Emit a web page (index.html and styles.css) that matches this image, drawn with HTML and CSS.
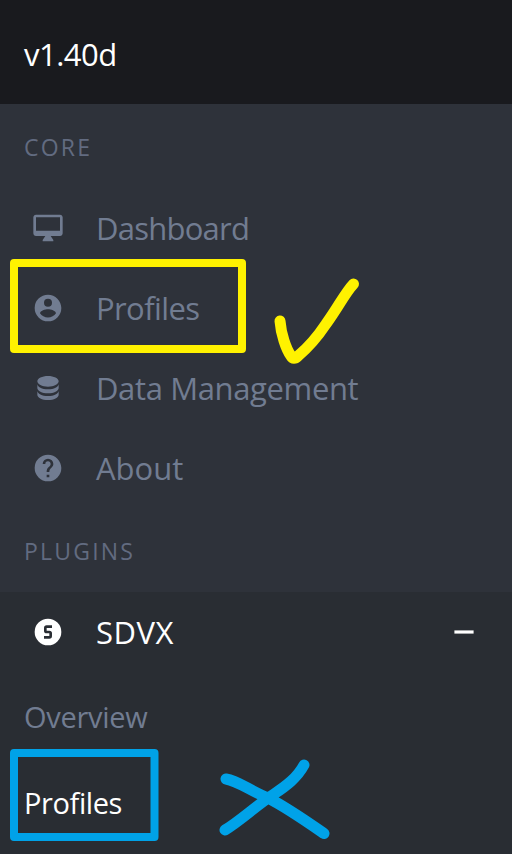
FILE: index.html
```html
<!DOCTYPE html>
<html lang="en">
<head>
<meta charset="utf-8">
<title>v1.40d</title>
<link rel="stylesheet" href="styles.css">
</head>
<body>
<aside class="sidebar">
  <header class="brand"><span class="t-version">v1.40d</span></header>
  <h2 class="label label-core"><span>CORE</span></h2>
  <nav class="menu">
    <a class="item"><svg class="icon" viewBox="0 0 24 24"><path d="M21 2H3c-1.1 0-2 .9-2 2v12c0 1.1.9 2 2 2h7l-2 3v1h8v-1l-2-3h7c1.1 0 2-.9 2-2V4c0-1.1-.9-2-2-2zm0 12H3V4h18v10z"/></svg><span class="t-dashboard">Dashboard</span></a>
    <a class="item"><svg class="icon" viewBox="0 0 24 24"><path d="M12,19.2C9.5,19.2 7.29,17.92 6,16C6.03,14 10,12.9 12,12.9C14,12.9 17.97,14 18,16C16.71,17.92 14.5,19.2 12,19.2M12,5A3,3 0 0,1 15,8A3,3 0 0,1 12,11A3,3 0 0,1 9,8A3,3 0 0,1 12,5M12,2A10,10 0 0,0 2,12A10,10 0 0,0 12,22A10,10 0 0,0 22,12C22,6.47 17.5,2 12,2Z"/></svg><span class="t-profiles">Profiles</span></a>
    <a class="item"><svg class="icon" viewBox="0 0 24 24"><path d="M12,3C7.58,3 4,4.79 4,7C4,9.21 7.58,11 12,11C16.42,11 20,9.21 20,7C20,4.79 16.42,3 12,3M4,9V12C4,14.21 7.58,16 12,16C16.42,16 20,14.21 20,12V9C20,11.21 16.42,13 12,13C7.58,13 4,11.21 4,9M4,14V17C4,19.21 7.58,21 12,21C16.42,21 20,19.21 20,17V14C20,16.21 16.42,18 12,18C7.58,18 4,16.21 4,14Z"/></svg><span class="t-data">Data Management</span></a>
    <a class="item"><svg class="icon" viewBox="0 0 24 24"><path d="M15.07,11.25L14.17,12.17C13.45,12.89 13,13.5 13,15H11V14.5C11,13.39 11.45,12.39 12.17,11.67L13.41,10.41C13.78,10.05 14,9.55 14,9C14,7.89 13.1,7 12,7A2,2 0 0,0 10,9H8A4,4 0 0,1 12,5A4,4 0 0,1 16,9C16,9.88 15.64,10.67 15.07,11.25M13,19H11V17H13M12,2A10,10 0 0,0 2,12A10,10 0 0,0 12,22A10,10 0 0,0 22,12C22,6.47 17.5,2 12,2Z"/></svg><span class="t-about">About</span></a>
  </nav>
  <h2 class="label label-plugins"><span>PLUGINS</span></h2>
  <section class="plugin">
    <a class="item active"><svg class="icon" viewBox="0 0 24 24"><path d="M11,7A2,2 0 0,0 9,9V11A2,2 0 0,0 11,13H13V15H9V17H13A2,2 0 0,0 15,15V13A2,2 0 0,0 13,11H11V9H15V7H11M12,2A10,10 0 0,1 22,12A10,10 0 0,1 12,22A10,10 0 0,1 2,12A10,10 0 0,1 12,2Z"/></svg><span class="t-sdvx">SDVX</span><svg class="icon toggle" viewBox="0 0 24 24"><path d="M19.2,13.2H4.8V10.8H19.2V13.2Z"/></svg></a>
    <a class="sub"><span class="t-overview">Overview</span></a>
    <a class="sub active"><span class="t-subprofiles">Profiles</span></a>
  </section>
</aside>
<svg class="marks" viewBox="0 0 512 854">
  <g class="yellow">
    <rect class="frame" x="14" y="263" width="228" height="86"/>
    <path class="stroke" d="M280 321C281 334 286 349 291 356Q293.500 360.500 298 356C304 351 314 342 326 324C339 306 345 293 353.500 284"/>
  </g>
  <g class="blue">
    <rect class="frame" x="14" y="753" width="140.500" height="84"/>
    <path class="stroke" d="M226 779C238 781 249 790 268 798C286 807 306 821 324 833.500M225 830C240 821 257 805 274 794C286 786 297 778 304 765"/>
  </g>
</svg>
</body>
</html>
```
FILE: styles.css
```css
body {
  margin: 0;
  background: #2e323a;
  font-family: "Open Sans", "Noto Sans", sans-serif;
}
.sidebar {
  display: flex;
  flex-direction: column;
  height: 854px;
  overflow: hidden;
  color: #717c91;
  white-space: nowrap;
}
.brand {
  display: flex;
  align-items: center;
  height: 104px;
  padding: 4px 24px 0;
  box-sizing: border-box;
  background: #191a1e;
  color: #fff;
  font-size: 31px;
}
.label {
  display: flex;
  align-items: center;
  height: 84px;
  margin: 0;
  padding: 1px 24px 0;
  box-sizing: border-box;
  color: #626b80;
  font-size: 23px;
  font-weight: 400;
  letter-spacing: 2.200px;
}
.item {
  display: flex;
  align-items: center;
  height: 80px;
  padding: 0 32px;
  font-size: 31px;
}
.item span {
  margin-left: 32px;
}
.icon {
  width: 32px;
  height: 32px;
  flex: none;
  fill: currentColor;
}
.plugin {
  flex: 1;
  background: #292d33;
}
.active {
  color: #fff;
}
.toggle {
  margin-left: auto;
}
.sub {
  display: flex;
  align-items: center;
  height: 86px;
  box-sizing: border-box;
  padding: 2px 0 0 24px;
  font-size: 29px;
}
.t-version {
  letter-spacing: -0.500px;
}
.t-dashboard {
  letter-spacing: -0.750px;
}
.t-profiles {
  letter-spacing: -0.600px;
}
.t-data {
  letter-spacing: -0.370px;
}
.t-sdvx {
  letter-spacing: 0.500px;
}
.t-overview {
  letter-spacing: -0.300px;
}
.t-subprofiles {
  letter-spacing: -0.400px;
}
.marks {
  position: absolute;
  inset: 0;
  width: 512px;
  height: 854px;
  fill: none;
  stroke-linecap: round;
  stroke-linejoin: round;
}
.yellow {
  stroke: #fff200;
}
.blue {
  stroke: #00a2e8;
}
.frame {
  stroke-width: 8px;
}
.stroke {
  stroke-width: 11px;
}
```
